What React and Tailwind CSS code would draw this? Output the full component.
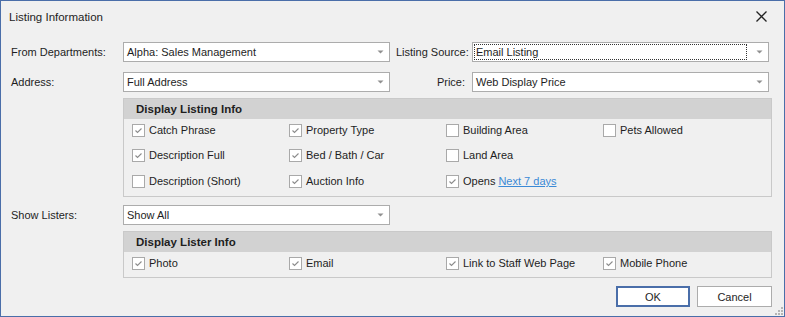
import React from "react";

const Check = ({ on }) => (
  <span className="flex h-[13px] w-[13px] shrink-0 items-center justify-center border border-[#a9a9a9] bg-white">
    {on && (
      <svg width="9" height="9" viewBox="0 0 9 9">
        <path d="M1.5 4.5 L3.5 6.5 L7.5 2.5" fill="none" stroke="#8c8c8c" strokeWidth="1.1" />
      </svg>
    )}
  </span>
);

const Item = ({ label, on, children }) => (
  <div className="flex w-[157px] items-center gap-[4px] whitespace-nowrap">
    <Check on={on} />
    <span>{label}</span>
    {children}
  </div>
);

const Combo = ({ value, w, focus }) => (
  <div className={`flex h-[20px] shrink-0 items-center border border-[#acacac] bg-white pl-[2px] pr-[5px] ${w}`}>
    <span
      className={`flex-1 whitespace-nowrap pl-[1px] leading-[14px] ${
        focus ? "mr-[10px] outline outline-1 outline-dotted outline-[#333]" : ""
      }`}
    >
      {value}
    </span>
    <svg width="7" height="4" viewBox="0 0 7 4" className="ml-auto">
      <path d="M0.5 0.5 L6.5 0.5 L3.5 3.5 Z" fill="#909090" />
    </svg>
  </div>
);

const Group = ({ title, children }) => (
  <div className="ml-[112px] w-[649px] border border-[#c9c9c9]">
    <div className="flex h-[20px] items-center bg-[#d2d2d2] pl-[12px] text-[11.5px] font-bold">{title}</div>
    {children}
  </div>
);

export default function App() {
  return (
    <div
      className="relative flex h-[317px] w-[785px] flex-col overflow-hidden border border-[#4a6ea9] bg-[#f0f0f0] text-[11px] leading-[14px] text-[#1e1e1e] [&>*]:shrink-0"
      style={{ fontFamily: '"Liberation Sans", Arial, sans-serif' }}
    >
      <div className="flex h-[31px] items-center justify-between pl-[8px] pr-[17px]">
        <span className="text-[11.5px]">Listing Information</span>
        <svg width="11" height="11" viewBox="0 0 11 11">
          <path d="M0.5 0.5 L10.5 10.5 M10.5 0.5 L0.5 10.5" stroke="#222" strokeWidth="1.3" />
        </svg>
      </div>

      <div className="ml-[10px] mt-[10px] flex items-center whitespace-nowrap">
        <span className="w-[112px]">From Departments:</span>
        <Combo value="Alpha: Sales Management" w="w-[267px]" />
        <span className="w-[82px] pl-[6px]">Listing Source:</span>
        <Combo value="Email Listing" w="w-[297px]" focus />
      </div>

      <div className="ml-[10px] mt-[10px] flex items-center whitespace-nowrap">
        <span className="w-[112px]">Address:</span>
        <Combo value="Full Address" w="w-[267px]" />
        <span className="w-[82px] pr-[7px] text-right">Price:</span>
        <Combo value="Web Display Price" w="w-[297px]" />
      </div>

      <div className="ml-[10px] mt-[6px]">
        <Group title="Display Listing Info">
          <div className="flex flex-col gap-[11px] pb-[8px] pl-[8px] pt-[4px]">
            <div className="flex">
              <Item label="Catch Phrase" on />
              <Item label="Property Type" on />
              <Item label="Building Area" />
              <Item label="Pets Allowed" />
            </div>
            <div className="flex">
              <Item label="Description Full" on />
              <Item label="Bed / Bath / Car" on />
              <Item label="Land Area" />
            </div>
            <div className="mt-[1px] flex">
              <Item label="Description (Short)" />
              <Item label="Auction Info" on />
              <Item label="Opens" on>
                <span className="-ml-[1px] text-[#3b8ad6] underline">Next 7 days</span>
              </Item>
            </div>
          </div>
        </Group>
      </div>

      <div className="ml-[10px] mt-[8px] flex items-center">
        <span className="w-[112px]">Show Listers:</span>
        <Combo value="Show All" w="w-[267px]" />
      </div>

      <div className="ml-[10px] mt-[6px]">
        <Group title="Display Lister Info">
          <div className="flex pb-[7px] pl-[8px] pt-[4px]">
            <Item label="Photo" on />
            <Item label="Email" on />
            <Item label="Link to Staff Web Page" on />
            <Item label="Mobile Phone" on />
          </div>
        </Group>
      </div>

      <div className="mr-[12px] mt-[8px] flex justify-end gap-[7px]">
        <button className="h-[21px] w-[74px] border-2 border-[#4a6ea9] bg-white">OK</button>
        <button className="h-[21px] w-[75px] border border-[#acacac] bg-white">Cancel</button>
      </div>

      <svg width="8" height="8" viewBox="0 0 8 8" className="absolute bottom-[1px] right-[1px]">
        <g fill="#b5b5b5">
          <rect x="6" y="0" width="2" height="2" />
          <rect x="3" y="3" width="2" height="2" />
          <rect x="6" y="3" width="2" height="2" />
          <rect x="0" y="6" width="2" height="2" />
          <rect x="3" y="6" width="2" height="2" />
          <rect x="6" y="6" width="2" height="2" />
        </g>
      </svg>
    </div>
  );
}
